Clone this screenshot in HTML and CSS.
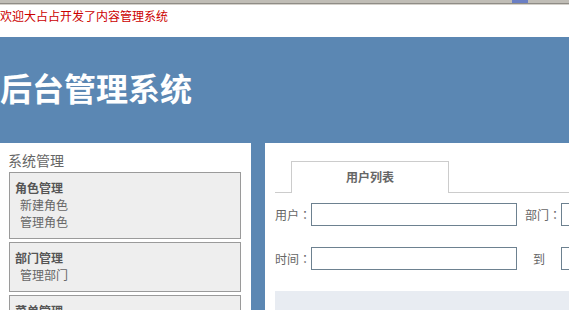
FILE: index.html
```html
<!DOCTYPE html>
<html lang="zh-CN">
<head>
<meta charset="utf-8">
<title>后台管理系统</title>
<link rel="stylesheet" href="styles.css">
</head>
<body>
<div class="chrome"><span class="chrome-btn"></span></div>
<div class="welcome">欢迎大占占开发了内容管理系统</div>
<header class="header"><h1 class="title">后台管理系统</h1></header>
<div class="main">
  <aside class="sidebar">
    <div class="side-head">系统管理</div>
    <div class="group">
      <div class="group-title">角色管理</div>
      <div class="group-item">新建角色</div>
      <div class="group-item">管理角色</div>
    </div>
    <div class="group">
      <div class="group-title">部门管理</div>
      <div class="group-item">管理部门</div>
    </div>
    <div class="group">
      <div class="group-title">菜单管理</div>
      <div class="group-item">新建菜单</div>
      <div class="group-item">管理菜单</div>
    </div>
  </aside>
  <section class="content">
    <div class="tabs"><div class="tab">用户列表</div></div>
    <div class="form-row first">
      <span class="label">用户<span class="colon" lang="zh-TW">：</span></span><input class="field" type="text">
      <span class="label gap">部门<span class="colon" lang="zh-TW">：</span></span><input class="field" type="text">
    </div>
    <div class="form-row">
      <span class="label">时间<span class="colon" lang="zh-TW">：</span></span><input class="field" type="text">
      <span class="label gap to">到</span><input class="field" type="text">
    </div>
    <div class="table-area"></div>
  </section>
</div>
</body>
</html>
```

FILE: styles.css
```css
html, body {
  margin: 0;
  padding: 0;
  overflow: hidden;
  background: #fff;
  font-family: "Noto Sans CJK SC", "Noto Sans", sans-serif;
  font-size: 12px;
  color: #555;
}
.chrome {
  position: relative;
  height: 6px;
  background: linear-gradient(to bottom, #c0bdb6 0, #c0bdb6 3px, #8f8c86 3px, #8f8c86 4px, #d3d0ca 4px, #d3d0ca 5px, #fff 5px);
}
.chrome-btn {
  position: absolute;
  left: 512px;
  top: 0;
  width: 16px;
  height: 3px;
  background: #6b7fc4;
}
.welcome {
  height: 31px;
  line-height: 20px;
  color: #cc0000;
  font-size: 12px;
  white-space: nowrap;
}
.header {
  background: #5b87b3;
  height: 106px;
  box-sizing: border-box;
  padding-top: 30px;
}
.title {
  margin: 0;
  font-size: 32px;
  line-height: 40px;
  font-weight: bold;
  color: #fff;
  white-space: nowrap;
}
.main {
  display: flex;
  gap: 14px;
  background: #5b87b3;
  width: 1000px;
  height: 300px;
}
.sidebar {
  width: 251px;
  flex: none;
  background: #fff;
  box-sizing: border-box;
  padding: 8px 10px 0 9px;
}
.side-head {
  font-size: 14px;
  line-height: 18px;
  color: #666;
  margin-left: -1px;
  margin-bottom: 3px;
}
.group {
  background: #eee;
  border: 1px solid #9a9a9a;
  padding: 6px 5px 8px;
  margin-bottom: 3px;
}
.group-title {
  font-weight: bold;
  line-height: 17px;
  color: #555;
}
.group-item {
  line-height: 17px;
  padding-left: 5px;
  color: #666;
}
.content {
  flex: 1;
  background: #fff;
  padding: 18px 10px 0;
}
.tabs {
  display: flex;
  border-bottom: 1px solid #ccc;
  padding-left: 16px;
}
.tab {
  width: 156px;
  height: 30px;
  line-height: 30px;
  text-align: center;
  border: 1px solid #ccc;
  border-bottom: none;
  background: #fff;
  margin-bottom: -1px;
  padding-bottom: 1px;
  font-weight: bold;
  color: #666;
}
.form-row {
  display: flex;
  align-items: center;
  margin-top: 21px;
}
.form-row.first {
  margin-top: 10px;
}
.label {
  width: 36px;
  flex: none;
  white-space: nowrap;
  color: #666;
}
.colon {
  font-family: "Noto Sans CJK TC", "Noto Sans CJK SC", sans-serif;
}
.label.gap {
  margin-left: 8px;
}
.label.to {
  box-sizing: border-box;
  padding-left: 8px;
}
.field {
  width: 206px;
  height: 23px;
  box-sizing: border-box;
  border: 1px solid #6d8190;
  margin: 0;
  padding: 0 3px;
  background: #fff;
  flex: none;
}
.table-area {
  margin-top: 21px;
  height: 120px;
  background: #e8ecf2;
}
```
